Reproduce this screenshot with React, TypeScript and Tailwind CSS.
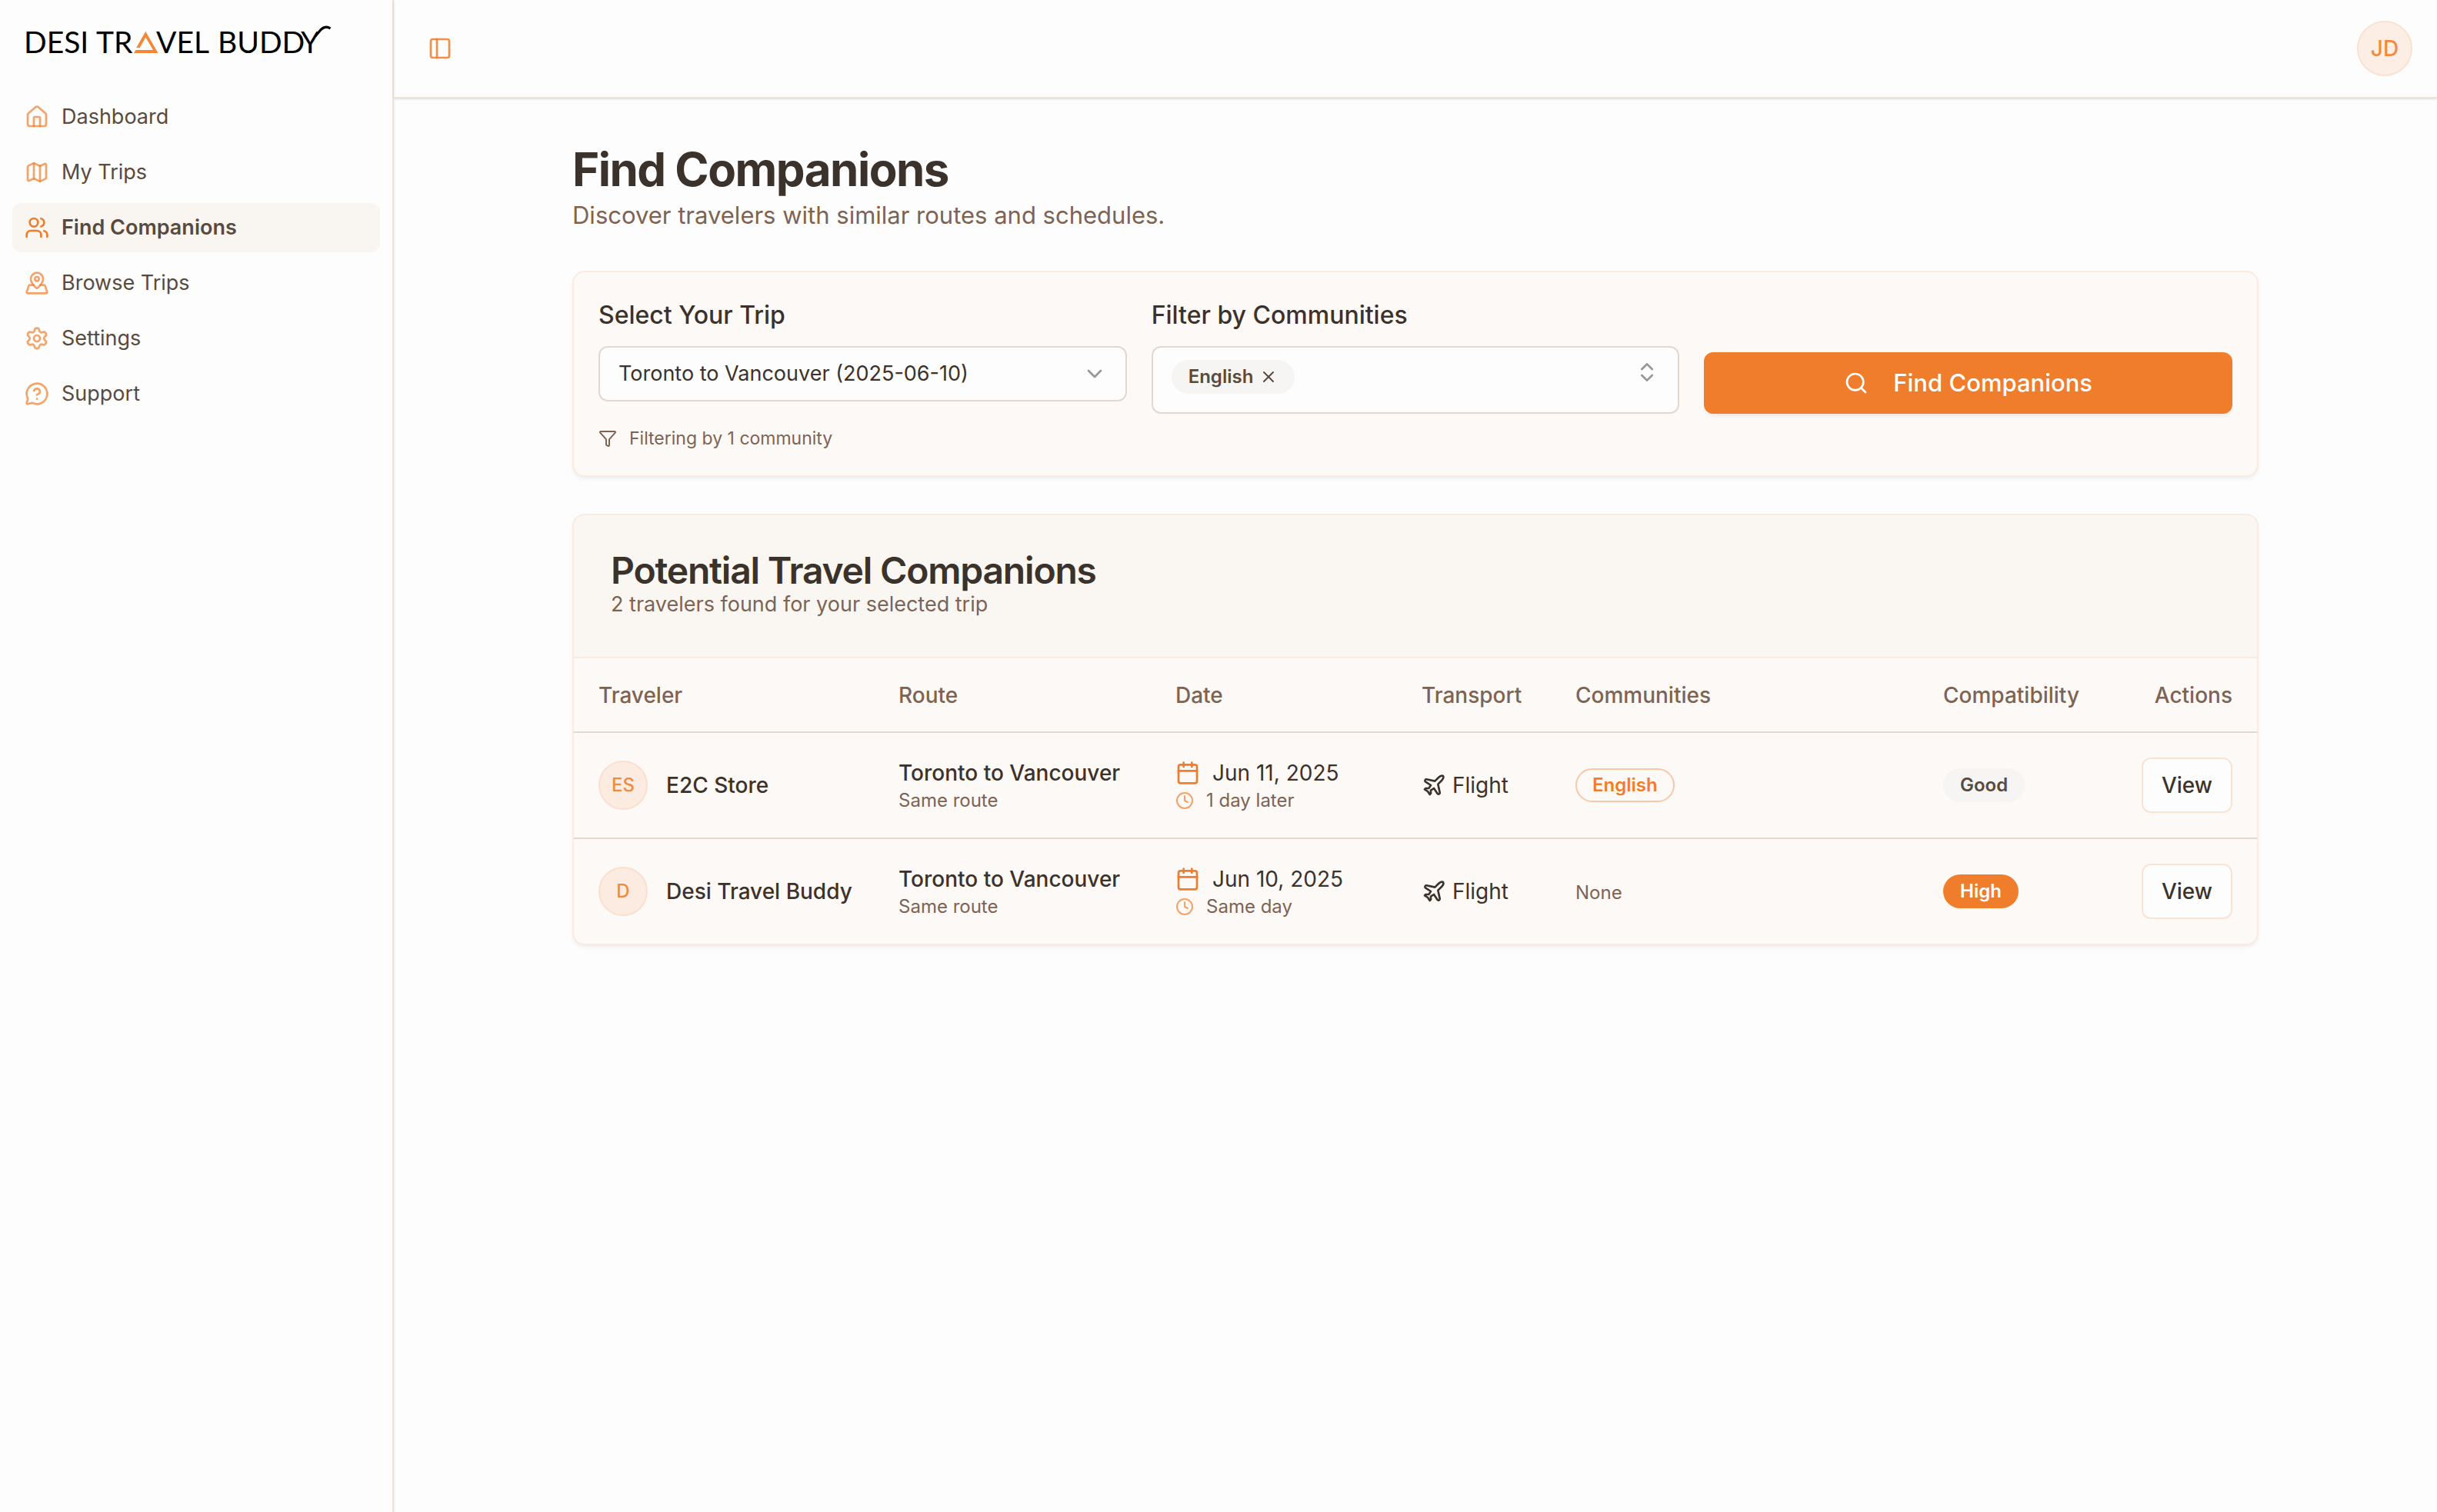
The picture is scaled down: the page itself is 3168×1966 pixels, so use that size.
import { useState } from 'react';
import {
  Calendar,
  ChevronDown,
  ChevronsUpDown,
  Clock,
  Filter,
  House,
  Map,
  MapPinned,
  MessageCircleQuestion,
  PanelLeft,
  Plane,
  Search,
  Settings,
  Users,
  X,
} from 'lucide-react';

const navItems = [
  { label: 'Dashboard', icon: House },
  { label: 'My Trips', icon: Map },
  { label: 'Find Companions', icon: Users },
  { label: 'Browse Trips', icon: MapPinned },
  { label: 'Settings', icon: Settings },
  { label: 'Support', icon: MessageCircleQuestion },
];

const travelers = [
  {
    initials: 'ES',
    name: 'E2C Store',
    route: 'Toronto to Vancouver',
    routeNote: 'Same route',
    date: 'Jun 11, 2025',
    dateNote: '1 day later',
    transport: 'Flight',
    communities: ['English'],
    compatibility: 'Good',
  },
  {
    initials: 'D',
    name: 'Desi Travel Buddy',
    route: 'Toronto to Vancouver',
    routeNote: 'Same route',
    date: 'Jun 10, 2025',
    dateNote: 'Same day',
    transport: 'Flight',
    communities: [],
    compatibility: 'High',
  },
];

function Logo() {
  return (
    <svg
      viewBox="-4 -8 408 60"
      className="w-[408px] h-[60px]"
      role="img"
      aria-label="Desi Travel Buddy"
      fontFamily="Lato, sans-serif"
      fontSize="39"
    >
      <text x="-1" y="37">DESI</text>
      <text x="93" y="37">TR</text>
      <path d="M157.300 9 173.500 37H142l2.500-4h22.500L157.300 16.500 149.700 30h-4.500Z" fill="#f58634" />
      <text x="171" y="37">VEL</text>
      <text x="251" y="37">BUDD</text>
      <text x="359" y="37">Y</text>
      <path d="M378 15 383 9q7-9 14.500-4" fill="none" stroke="#000" strokeWidth="3.200" />
    </svg>
  );
}

function Sidebar() {
  return (
    <aside className="w-[512px] shrink-0 border-r-2 border-[#ece5dc] shadow-sm">
      <div className="h-[104px] px-7 pt-6">
        <Logo />
      </div>
      <nav className="flex flex-col gap-2 px-4 pt-4">
        {navItems.map(({ label, icon: Icon }) => {
          const active = label === 'Find Companions';
          return (
            <a
              key={label}
              href="#"
              className={`flex items-center gap-4 h-16 px-4 rounded-xl text-[27px] text-[#594a40] ${
                active ? 'bg-[#f9f6f1] font-semibold' : ''
              }`}
            >
              <Icon size={32} className={active ? 'text-[#f07d2b]' : 'text-[#f07d2b]/70'} />
              {label}
            </a>
          );
        })}
      </nav>
    </aside>
  );
}

function Header() {
  return (
    <header className="flex items-center justify-between h-32 pl-11 pr-8 border-b-2 border-[#ece5dc] shadow-sm">
      <button aria-label="Toggle sidebar">
        <PanelLeft size={32} className="text-[#f07d2b]/85" />
      </button>
      <button className="size-18 rounded-full border-2 border-[#fae2d1] bg-[#fceee4] text-[28px] font-medium text-[#f08b40]">
        JD
      </button>
    </header>
  );
}

function SearchCard() {
  const [communities, setCommunities] = useState(['English']);

  return (
    <section className="rounded-2xl border-2 border-[#fbeadf] bg-[#fdf9f6] p-8 shadow-md shadow-black/5">
      <div className="grid grid-cols-3 gap-8">
        <div>
          <label htmlFor="trip" className="block mb-4 text-[32px] leading-[48px] font-medium">
            Select Your Trip
          </label>
          <div className="relative">
            <select
              id="trip"
              className="w-full h-18 px-6 appearance-none rounded-xl border-2 border-[#e3d8d0] bg-[#fdfdfd] text-[27px]"
            >
              <option>Toronto to Vancouver (2025-06-10)</option>
            </select>
            <ChevronDown
              size={32}
              className="absolute right-[26px] top-5 opacity-50 pointer-events-none"
            />
          </div>
        </div>

        <div>
          <p id="communities-label" className="mb-4 text-[32px] leading-[48px] font-medium">
            Filter by Communities
          </p>
          <div
            role="group"
            aria-labelledby="communities-label"
            className="flex items-start justify-between h-22 px-6 py-4 rounded-xl border-2 border-[#e3d8d0] bg-[#fdfdfd]"
          >
            <div className="flex gap-2">
              {communities.map((name) => (
                <span
                  key={name}
                  className="flex items-center gap-2 h-11 px-[22px] rounded-full bg-[#f6f5f3] text-2xl font-semibold text-[#594a40]"
                >
                  {name}
                  <button
                    aria-label={`Remove ${name}`}
                    onClick={() => setCommunities(communities.filter((c) => c !== name))}
                  >
                    <X size={24} />
                  </button>
                </span>
              ))}
            </div>
            <button aria-label="Choose communities">
              <ChevronsUpDown size={32} className="opacity-50" />
            </button>
          </div>
        </div>

        <button className="self-end flex items-center justify-center gap-8 h-20 rounded-xl bg-[#f07d2b] text-[31px] font-medium text-white shadow-md shadow-black/5">
          <Search size={32} />
          Find Companions
        </button>
      </div>

      <p className="flex items-center gap-4 mt-4 text-[23px] leading-8 text-[#7d6353]">
        <Filter size={24} />
        Filtering by {communities.length} community
      </p>
    </section>
  );
}

function CompatibilityBadge({ level }: { level: string }) {
  return (
    <span
      className={`inline-flex items-center h-11 px-[22px] rounded-full text-2xl font-semibold align-middle ${
        level === 'High' ? 'bg-[#f07d2b] text-white' : 'bg-[#f6f5f3] text-[#594a40]'
      }`}
    >
      {level}
    </span>
  );
}

function CompanionsTable() {
  return (
    <section className="mt-12 rounded-2xl border-2 border-[#fbeadf] bg-[#fdf9f6] overflow-hidden shadow-md shadow-black/5">
      <div className="p-12 border-b-2 border-[#fbeadf] bg-[#faf7f2]">
        <h2 className="text-5xl leading-[48px] font-semibold tracking-tight">
          Potential Travel Companions
        </h2>
        <p className="text-[27px] leading-10 text-[#7d6353]">
          {travelers.length} travelers found for your selected trip
        </p>
      </div>

      <table className="w-full table-fixed text-[28px] leading-10">
        <colgroup>
          <col className="w-[390px]" />
          <col className="w-[360px]" />
          <col className="w-[320px]" />
          <col className="w-[200px]" />
          <col />
          <col className="w-[240px]" />
          <col className="w-[200px]" />
        </colgroup>
        <thead>
          <tr className="h-24 border-b-2 border-[#e3d8d0] text-left text-[#7d6353] [&>th]:px-8 [&>th]:font-medium">
            <th>Traveler</th>
            <th>Route</th>
            <th>Date</th>
            <th>Transport</th>
            <th>Communities</th>
            <th>Compatibility</th>
            <th className="text-right">Actions</th>
          </tr>
        </thead>
        <tbody>
          {travelers.map((t) => (
            <tr
              key={t.name}
              className="border-b-2 border-[#e3d8d0] last:border-b-0 [&>td]:px-8 [&>td]:py-8"
            >
              <td>
                <div className="flex items-center gap-6 font-medium">
                  <span className="flex items-center justify-center size-16 shrink-0 rounded-full border-2 border-[#fae0ce] bg-[#fbebe0] text-2xl text-[#f08b40]">
                    {t.initials}
                  </span>
                  <span className="whitespace-nowrap">{t.name}</span>
                </div>
              </td>
              <td className="whitespace-nowrap">
                <div className="font-medium">{t.route}</div>
                <div className="text-2xl leading-8 text-[#7d6353]">{t.routeNote}</div>
              </td>
              <td className="whitespace-nowrap">
                <div className="flex items-center gap-4">
                  <Calendar size={32} className="text-[#f07d2b]" />
                  {t.date}
                </div>
                <div className="flex items-center gap-4 text-2xl leading-8 text-[#7d6353]">
                  <Clock size={24} className="text-[#f07d2b]/70" />
                  {t.dateNote}
                </div>
              </td>
              <td>
                <div className="flex items-center gap-2">
                  <Plane size={32} />
                  {t.transport}
                </div>
              </td>
              <td>
                {t.communities.length === 0 && (
                  <span className="text-2xl text-[#7d6353] align-middle">None</span>
                )}
                {t.communities.map((name) => (
                  <span
                    key={name}
                    className="inline-flex items-center h-11 px-5 rounded-full border-2 border-[#f8c8a6] text-2xl font-semibold text-[#f07d2b] align-middle"
                  >
                    {name}
                  </span>
                ))}
              </td>
              <td>
                <CompatibilityBadge level={t.compatibility} />
              </td>
              <td className="text-right">
                <button className="h-18 px-6 rounded-xl border-2 border-[#fbe3d3] bg-[#fdfdfd] font-medium align-middle">
                  View
                </button>
              </td>
            </tr>
          ))}
        </tbody>
      </table>
    </section>
  );
}

export default function App() {
  return (
    <div className="flex min-h-screen bg-[#fdfdfd] font-[Inter,sans-serif] text-[#3b322b]">
      <Sidebar />
      <div className="flex-1 min-w-0">
        <Header />
        <main className="max-w-[2304px] mx-auto px-14 py-14">
          <h1 className="text-6xl leading-[72px] font-bold tracking-tight">Find Companions</h1>
          <p className="mb-12 text-[31px] leading-[48px] text-[#7d6353]">
            Discover travelers with similar routes and schedules.
          </p>
          <SearchCard />
          <CompanionsTable />
        </main>
      </div>
    </div>
  );
}
